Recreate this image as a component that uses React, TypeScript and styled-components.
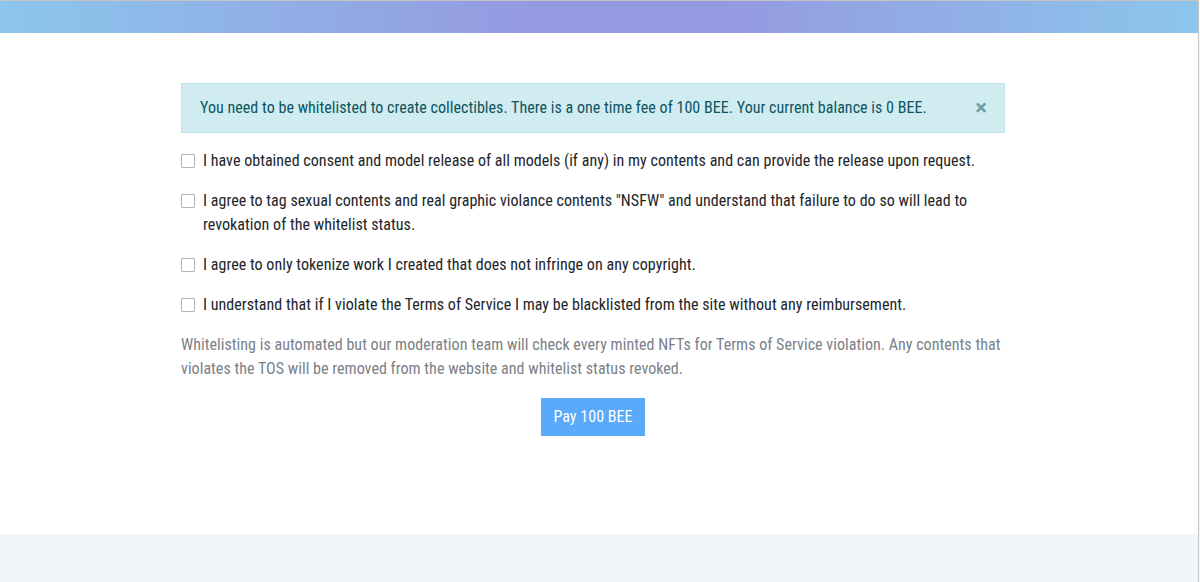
import React, { useState } from 'react';
import styled, { createGlobalStyle } from 'styled-components';

const GlobalStyle = createGlobalStyle`
  html, body {
    margin: 0;
    padding: 0;
    background: #f2f5f9;
    font-family: Roboto, "Liberation Sans", sans-serif;
  }
  * { box-sizing: border-box; }
`;

const terms = [
  'I have obtained consent and model release of all models (if any) in my contents and can provide the release upon request.',
  'I agree to tag sexual contents and real graphic violance contents "NSFW" and understand that failure to do so will lead to revokation of the whitelist status.',
  'I agree to only tokenize work I created that does not infringe on any copyright.',
  'I understand that if I violate the Terms of Service I may be blacklisted from the site without any reimbursement.',
];

const App = () => {
  const [checked, setChecked] = useState<boolean[]>(terms.map(() => false));
  const [showAlert, setShowAlert] = useState(true);

  const toggle = (i: number) => {
    setChecked((prev) => prev.map((v, idx) => (idx === i ? !v : v)));
  };

  return (
    <>
      <GlobalStyle />
      <Page>
        <TopBar />
        <Main>
          <Container>
            {showAlert && (
              <Alert role="alert">
                <span>
                  You need to be whitelisted to create collectibles. There is a one time fee of 100 BEE. Your
                  current balance is 0 BEE.
                </span>
                <CloseButton type="button" aria-label="Close" onClick={() => setShowAlert(false)}>
                  ×
                </CloseButton>
              </Alert>
            )}

            {terms.map((text, i) => (
              <TermRow key={i}>
                <Check type="checkbox" checked={checked[i]} onChange={() => toggle(i)} />
                <span>{text}</span>
              </TermRow>
            ))}

            <Note>
              Whitelisting is automated but our moderation team will check every minted NFTs for Terms of Service
              violation. Any contents that violates the TOS will be removed from the website and whitelist status
              revoked.
            </Note>

            <ButtonRow>
              <PayButton type="button">Pay 100 BEE</PayButton>
            </ButtonRow>
          </Container>
        </Main>
        <Footer />
      </Page>
    </>
  );
};

export default App;

const Page = styled.div`
  min-height: 582px;
  display: flex;
  flex-direction: column;
  border-top: 1px solid #c4c4c4;
  border-right: 1px solid #c8c8c8;
  width: 1199px;
  font-stretch: 87.5%;
  letter-spacing: 0.04px;
`;

const TopBar = styled.div`
  height: 32px;
  background: linear-gradient(90deg, #8cc6ec 0%, #9599e0 45%, #9599e0 60%, #8cc6ec 100%);
`;

const Main = styled.main`
  background: #ffffff;
  padding: 50px 12px 0 0;
  height: 501px;
`;

const Container = styled.div`
  width: 824px;
  margin: 0 auto;
`;

const Alert = styled.div`
  display: flex;
  align-items: center;
  justify-content: space-between;
  background: #d1ecf1;
  border: 1px solid #bee5eb;
  color: #0c5460;
  padding: 12px 17px 12px 18px;
  font-size: 16px;
  line-height: 24px;
  margin-bottom: 16px;
`;

const CloseButton = styled.button`
  background: none;
  border: 0;
  padding: 0;
  font-family: inherit;
  font-size: 22px;
  font-weight: 700;
  line-height: 1;
  color: #0c5460;
  opacity: 0.5;
  cursor: pointer;
`;

const TermRow = styled.label`
  display: flex;
  align-items: flex-start;
  gap: 8px;
  font-size: 16px;
  line-height: 24px;
  color: #212529;
  margin-bottom: 16px;
  padding-right: 30px;
`;

const Check = styled.input`
  appearance: none;
  flex: 0 0 auto;
  width: 14px;
  height: 14px;
  margin: 5px 0 0;
  border: 1px solid #b3b3b3;
  border-radius: 1px;
  background: #fff;
  cursor: pointer;

  &:checked {
    background: #5aa9fa;
    border-color: #5aa9fa;
  }
`;

const Note = styled.p`
  margin: 0 0 17px;
  font-size: 16px;
  line-height: 24px;
  color: #7b8087;
`;

const ButtonRow = styled.div`
  display: flex;
  justify-content: center;
`;

const PayButton = styled.button`
  background: #5aa9fa;
  border: 0;
  color: #ffffff;
  font-family: inherit;
  font-stretch: inherit;
  letter-spacing: inherit;
  font-size: 16px;
  line-height: 24px;
  padding: 7px 12px;
  height: 38px;
  cursor: pointer;
`;

const Footer = styled.footer`
  flex: 1;
  background: #f2f5f9;
`;
